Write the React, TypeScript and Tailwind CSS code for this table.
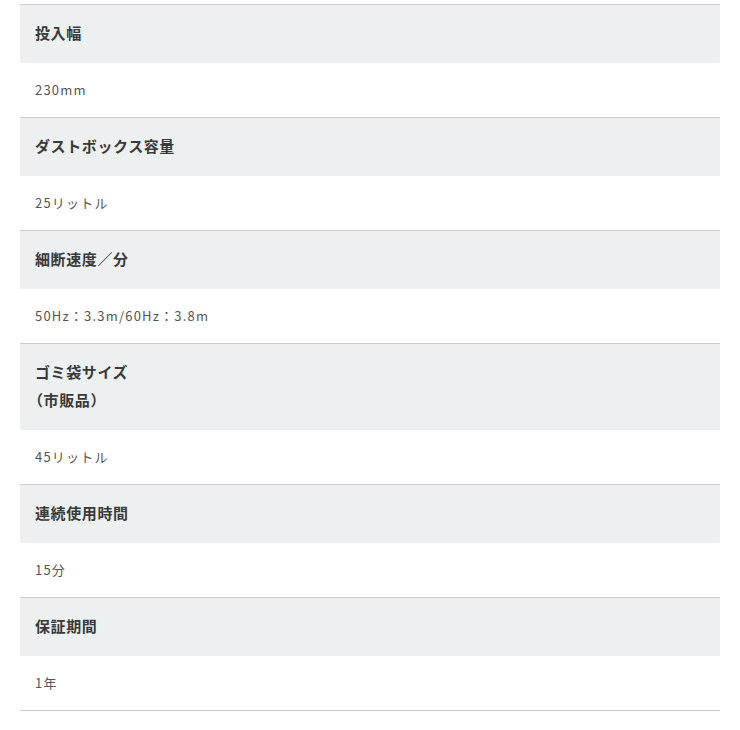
const specs: { label: string[]; value: string }[] = [
  { label: ['投入幅'], value: '230mm' },
  { label: ['ダストボックス容量'], value: '25リットル' },
  { label: ['細断速度／分'], value: '50Hz：3.3m/60Hz：3.8m' },
  { label: ['ゴミ袋サイズ', '（市販品）'], value: '45リットル' },
  { label: ['連続使用時間'], value: '15分' },
  { label: ['保証期間'], value: '1年' },
]

export default function App() {
  return (
    <div
      className="bg-white px-5 pt-1 pb-5 min-h-[730px]"
      style={{ fontFamily: '"Noto Sans CJK JP", "Noto Sans", sans-serif' }}
    >
      <dl className="border-t border-[#cccccc]">
        {specs.map((s) => (
          <div key={s.value} className="border-b border-[#cccccc]">
            <dt className="bg-[#ecf0f0] px-[15px] pt-[14px] pb-[16px] text-[15px] leading-[28px] font-bold text-[#3a3a3a] tracking-[0.6px]">
              {s.label.map((l, i) => (
                <div key={i} className={i > 0 ? '-ml-[7px]' : ''}>{l}</div>
              ))}
            </dt>
            <dd className="px-[15px] py-[15px] text-[13px] leading-[24px] text-[#555555] tracking-[1.2px]">
              {s.value}
            </dd>
          </div>
        ))}
      </dl>
    </div>
  )
}
